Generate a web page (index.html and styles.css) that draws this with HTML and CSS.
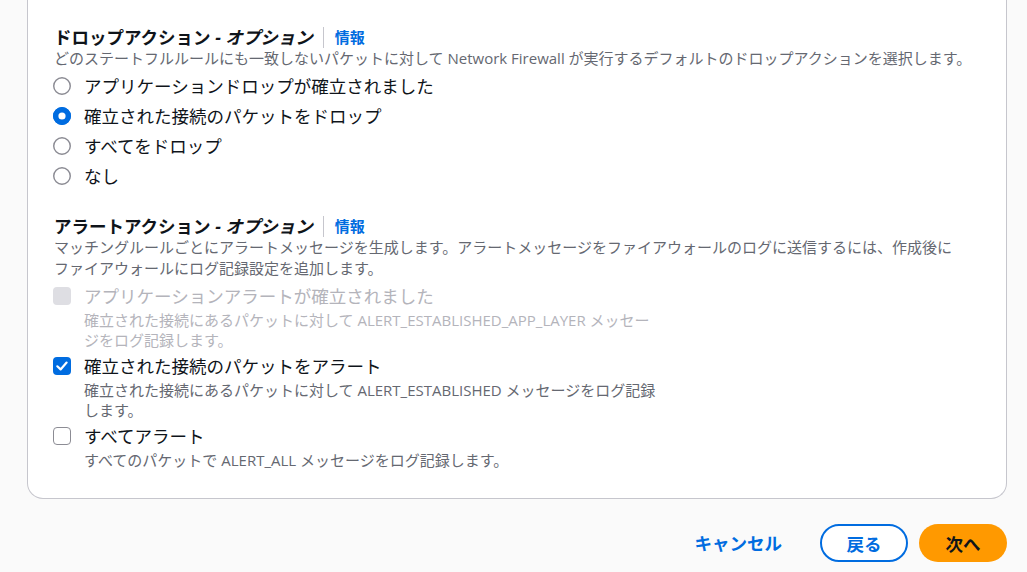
FILE: index.html
```html
<!DOCTYPE html>
<html lang="ja">
<head>
<meta charset="utf-8">
<title>ルールグループ設定</title>
<link rel="stylesheet" href="styles.css">
</head>
<body>
<div class="page">
  <section class="card">
    <div class="field">
      <div class="field-head">
        <span class="field-label">ドロップアクション <i>- オプション</i></span>
        <span class="info-sep"></span>
        <a class="info" href="#">情報</a>
      </div>
      <div class="desc">どのステートフルルールにも一致しないパケットに対して Network Firewall が実行するデフォルトのドロップアクションを選択します。</div>
      <div class="radio-group">
        <label class="radio">
          <svg class="radio-ctrl" viewBox="0 0 100 100"><circle class="ring" cx="50" cy="50" r="46"/></svg>
          <span class="radio-label">アプリケーションドロップが確立されました</span>
        </label>
        <label class="radio">
          <svg class="radio-ctrl" viewBox="0 0 100 100"><circle class="ring checked" cx="50" cy="50" r="46"/><circle class="dot" cx="50" cy="50" r="35"/></svg>
          <span class="radio-label">確立された接続のパケットをドロップ</span>
        </label>
        <label class="radio">
          <svg class="radio-ctrl" viewBox="0 0 100 100"><circle class="ring" cx="50" cy="50" r="46"/></svg>
          <span class="radio-label">すべてをドロップ</span>
        </label>
        <label class="radio">
          <svg class="radio-ctrl" viewBox="0 0 100 100"><circle class="ring" cx="50" cy="50" r="46"/></svg>
          <span class="radio-label">なし</span>
        </label>
      </div>
    </div>

    <div class="field field-alert">
      <div class="field-head">
        <span class="field-label">アラートアクション <i>- オプション</i></span>
        <span class="info-sep"></span>
        <a class="info" href="#">情報</a>
      </div>
      <div class="desc">マッチングルールごとにアラートメッセージを生成します。アラートメッセージをファイアウォールのログに送信するには、作成後にファイアウォールにログ記録設定を追加します。</div>
      <div class="check-group">
        <div class="check disabled">
          <span class="box box-disabled"></span>
          <div class="check-text">
            <div class="check-label">アプリケーションアラートが確立されました</div>
            <div class="check-desc">確立された接続にあるパケットに対して ALERT_ESTABLISHED_APP_LAYER メッセージをログ記録します。</div>
          </div>
        </div>
        <div class="check">
          <span class="box box-checked"><svg viewBox="0 0 18 18"><polyline points="4.3,9.3 7.6,12.4 13.6,5.6"/></svg></span>
          <div class="check-text">
            <div class="check-label">確立された接続のパケットをアラート</div>
            <div class="check-desc">確立された接続にあるパケットに対して ALERT_ESTABLISHED メッセージをログ記録します。</div>
          </div>
        </div>
        <div class="check">
          <span class="box"></span>
          <div class="check-text">
            <div class="check-label">すべてアラート</div>
            <div class="check-desc">すべてのパケットで ALERT_ALL メッセージをログ記録します。</div>
          </div>
        </div>
      </div>
    </div>
  </section>

  <div class="actions">
    <a class="btn-link" href="#">キャンセル</a>
    <a class="btn btn-normal" href="#">戻る</a>
    <a class="btn btn-primary" href="#">次へ</a>
  </div>
</div>
</body>
</html>
```

FILE: styles.css
```css
html, body {
  margin: 0;
  padding: 0;
}
body {
  background: #fafafa;
  font-family: "Open Sans", "Noto Sans CJK JP", sans-serif;
  color: #0f141a;
  line-break: strict;
}
.page {
  padding: 0 20px 0 27px;
}
.card {
  background: #ffffff;
  border: 1px solid #c6c6cd;
  border-top: none;
  border-radius: 0 0 16px 16px;
  padding: 26px 26px 28px 26px;
}
.field-head {
  display: flex;
  align-items: center;
  height: 22px;
}
.field-label {
  font-size: 17.5px;
  font-weight: 700;
  line-height: 22px;
  color: #0f141a;
}
.field-label i {
  font-style: italic;
}
.info-sep {
  width: 1px;
  height: 21px;
  background: #c6c6cd;
  margin: 0 11px 0 10px;
}
.info {
  font-size: 15px;
  font-weight: 700;
  color: #006ce0;
  text-decoration: none;
  line-height: 22px;
}
.desc {
  font-size: 15px;
  line-height: 21px;
  color: #656871;
}
.radio-group {
  margin-top: 2px;
  display: flex;
  flex-direction: column;
}
.radio {
  display: flex;
  align-items: center;
  height: 30px;
}
.radio-ctrl {
  width: 18px;
  height: 18px;
  margin-left: -1px;
  margin-right: 13px;
  flex: none;
}
.ring {
  fill: #ffffff;
  stroke: #8c8c94;
  stroke-width: 8;
}
.ring.checked {
  stroke: #006ce0;
}
.dot {
  fill: #ffffff;
  stroke: #006ce0;
  stroke-width: 30;
}
.radio-label {
  font-size: 17.5px;
  line-height: 24px;
}
.field-alert {
  margin-top: 24px;
}
.check-group {
  margin-top: 5px;
  display: flex;
  flex-direction: column;
  gap: 4px;
}
.check {
  display: flex;
  align-items: flex-start;
}
.box {
  flex: none;
  box-sizing: border-box;
  width: 18px;
  height: 18px;
  margin-top: 3px;
  margin-left: -1px;
  margin-right: 13px;
  border: 1.5px solid #8c8c94;
  border-radius: 4px;
  background: #ffffff;
  display: flex;
}
.box-disabled {
  border: none;
  background: #dedee3;
}
.box-checked {
  border: none;
  background: #006ce0;
}
.box svg {
  width: 18px;
  height: 18px;
}
.box polyline {
  fill: none;
  stroke: #ffffff;
  stroke-width: 2.2;
  stroke-linecap: round;
  stroke-linejoin: round;
}
.check-label {
  font-size: 17.5px;
  line-height: 24px;
}
.check-desc {
  margin-top: 2px;
  max-width: 580px;
  font-size: 15px;
  line-height: 20px;
  color: #656871;
}
.disabled .check-label,
.disabled .check-desc {
  color: #b4b4bb;
}
.actions {
  display: flex;
  justify-content: flex-end;
  align-items: center;
  gap: 11px;
  margin-top: 25px;
}
.btn-link {
  font-size: 17.5px;
  font-weight: 700;
  color: #006ce0;
  text-decoration: none;
  padding: 0 27px;
  line-height: 38px;
}
.btn {
  box-sizing: border-box;
  width: 88px;
  height: 38px;
  border-radius: 20px;
  display: flex;
  align-items: center;
  justify-content: center;
  font-size: 17.5px;
  font-weight: 700;
  text-decoration: none;
}
.btn-normal {
  background: #ffffff;
  border: 2px solid #006ce0;
  color: #006ce0;
}
.btn-primary {
  background: #ff9900;
  color: #0f141a;
}
```
